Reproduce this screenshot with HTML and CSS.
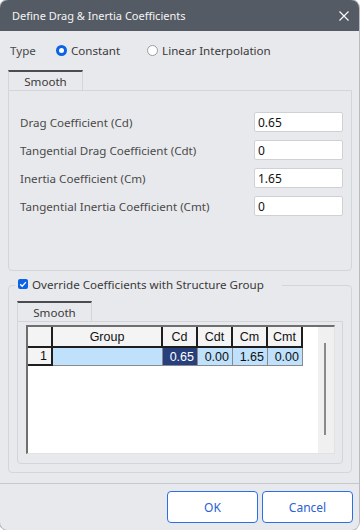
FILE: index.html
```html
<!DOCTYPE html>
<html>
<head>
<meta charset="utf-8">
<link rel="stylesheet" href="styles.css">
</head>
<body>
<div class="dialog">
  <div class="titlebar">
    <span class="title">Define Drag &amp; Inertia Coefficients</span>
    <svg class="close" width="10" height="10" viewBox="0 0 10 10"><path d="M0.5 0.5 L9.5 9.5 M9.5 0.5 L0.5 9.5" stroke="#ffffff" stroke-width="1.1" fill="none"/></svg>
  </div>
  <div class="content">
    <div class="type-row">
      <span class="type-label">Type</span>
      <span class="radio checked"></span><span class="radio-label">Constant</span>
      <span class="radio unchecked"></span><span class="radio-label">Linear Interpolation</span>
    </div>
    <div class="tab">Smooth</div>
    <div class="panel">
      <div class="field-row"><span class="field-label">Drag Coefficient (Cd)</span><span class="input">0.65</span></div>
      <div class="field-row"><span class="field-label">Tangential Drag Coefficient (Cdt)</span><span class="input">0</span></div>
      <div class="field-row"><span class="field-label">Inertia Coefficient (Cm)</span><span class="input">1.65</span></div>
      <div class="field-row"><span class="field-label">Tangential Inertia Coefficient (Cmt)</span><span class="input">0</span></div>
    </div>
    <div class="group">
      <div class="legend">
        <span class="checkbox"><svg width="10" height="10" viewBox="0 0 10 10"><path d="M2.2 5.2 L4.2 7.2 L7.9 3.1" stroke="#fff" stroke-width="1.3" fill="none"/></svg></span>
        <span class="legend-text">Override Coefficients with Structure Group</span>
      </div>
      <div class="tab inner-tab">Smooth</div>
      <div class="inner-panel">
        <div class="grid">
          <div class="grid-table">
            <div class="grow head">
              <div class="cell c-rh"></div>
              <div class="cell c-grp">Group</div>
              <div class="cell c-num">Cd</div>
              <div class="cell c-num">Cdt</div>
              <div class="cell c-num">Cm</div>
              <div class="cell c-num">Cmt</div>
            </div>
            <div class="grow data">
              <div class="cell c-rh">1</div>
              <div class="cell c-grp sel"></div>
              <div class="cell c-num active">0.65</div>
              <div class="cell c-num sel">0.00</div>
              <div class="cell c-num sel">1.65</div>
              <div class="cell c-num sel">0.00</div>
            </div>
          </div>
          <div class="scrollbar"><div class="thumb"></div></div>
        </div>
      </div>
    </div>
  </div>
  <div class="footer">
    <button class="btn">OK</button>
    <button class="btn">Cancel</button>
  </div>
</div>
</body>
</html>
```
FILE: styles.css
```css
html, body {
  margin: 0;
  padding: 0;
  background: #ffffff;
}
body {
  font-family: "Noto Sans", "Open Sans", sans-serif;
  font-size: 11.6px;
  color: #3a3a3a;
}
.dialog {
  width: 359px;
  height: 530px;
  background: #e8e9ec;
  border-radius: 8px;
  overflow: hidden;
  display: flex;
  flex-direction: column;
  box-shadow: 0 0 0 1px #b9bbc0;
}
.titlebar {
  height: 31px;
  background: #545b64;
  display: flex;
  align-items: center;
  justify-content: space-between;
  padding: 0 10px 0 12px;
  flex: none;
}
.title {
  color: #f4f4f4;
  font-size: 11px;
}
.content {
  padding: 0 7px 0 8px;
  flex: none;
}
.type-row {
  height: 39px;
  display: flex;
  align-items: center;
  padding-left: 2px;
}
.type-label {
  color: #4a4a4a;
  width: 46px;
}
.radio {
  width: 11px;
  height: 11px;
  border-radius: 50%;
  box-sizing: border-box;
  flex: none;
}
.radio.checked {
  background: #ffffff;
  border: 3px solid #0c63e4;
}
.radio.unchecked {
  background: #ffffff;
  border: 1px solid #9a9ca0;
  margin-left: 27px;
}
.radio-label {
  margin-left: 4px;
  color: #3a3a3a;
}
.tab {
  width: 75px;
  height: 20px;
  box-sizing: border-box;
  border-top: 2px solid #4a4c50;
  border-left: 1px solid #d3d5d9;
  border-right: 1px solid #d3d5d9;
  display: flex;
  align-items: center;
  justify-content: center;
  color: #3a3a3a;
}
.panel {
  height: 181px;
  box-sizing: border-box;
  border: 1px solid #d3d5d9;
  border-radius: 0 0 4px 4px;
  padding: 21px 8px 0 11px;
  display: flex;
  flex-direction: column;
  gap: 8px;
}
.field-row {
  height: 20px;
  display: flex;
  align-items: center;
  justify-content: space-between;
}
.field-label {
  color: #4a4a4a;
}
.input {
  width: 89px;
  height: 20px;
  box-sizing: border-box;
  background: #ffffff;
  border: 1px solid #cfd1d5;
  border-radius: 2px;
  padding-left: 3px;
  display: flex;
  align-items: center;
  color: #111;
  font-size: 12px;
}
.group {
  margin-top: 14px;
  border: 1px solid #d3d5d9;
  border-radius: 4px;
  padding: 0 8px 8px 8px;
  height: 188px;
  box-sizing: border-box;
}
.legend {
  margin-top: -11px;
  margin-left: -2px;
  height: 18px;
  width: fit-content;
  display: flex;
  align-items: center;
  padding: 0 18px 0 3px;
  background: #e8e9ec;
}
.checkbox {
  width: 10px;
  height: 10px;
  border-radius: 2px;
  background: #0c63e4;
  display: flex;
  flex: none;
}
.legend-text {
  margin-left: 4px;
  color: #3a3a3a;
}
.inner-tab {
  margin-top: 8px;
}
.inner-panel {
  height: 143px;
  box-sizing: border-box;
  border: 1px solid #d3d5d9;
  border-radius: 0 0 4px 4px;
  padding: 3px 7px 0 8px;
}
.grid {
  height: 129px;
  box-sizing: border-box;
  background: #ffffff;
  border-top: 2px solid #6f6f6f;
  border-left: 2px solid #6f6f6f;
  border-right: 1px solid #e2e2e2;
  border-bottom: 1px solid #e2e2e2;
  display: flex;
  font-family: "Liberation Sans", Arial, sans-serif;
  font-size: 12.5px;
  color: #111;
}
.grid-table {
  flex: 1;
}
.grow {
  display: flex;
}
.grow.head {
  height: 21px;
}
.grow.data {
  height: 18px;
}
.cell {
  box-sizing: border-box;
  display: flex;
  align-items: center;
  flex: none;
}
.head .cell {
  background: #f4f4f4;
  border-right: 2px solid #1e1e1e;
  border-bottom: 2px solid #1e1e1e;
  justify-content: center;
}
.c-rh {
  width: 25px;
}
.c-grp {
  width: 110px;
}
.c-num {
  width: 35px;
}
.data .cell {
  border-right: 1px solid #8a8a8a;
  border-bottom: 1px solid #8a8a8a;
  justify-content: flex-end;
  padding-right: 3px;
}
.data .c-rh {
  background: #f4f4f4;
  border-right: 2px solid #1e1e1e;
  border-bottom: 2px solid #1e1e1e;
  padding-right: 4px;
}
.data .sel {
  background: #bfe1fb;
}
.data .active {
  background: #273f7d;
  color: #ffffff;
}
.scrollbar {
  width: 16px;
  background: #f0f0f0;
  display: flex;
  justify-content: center;
  flex: none;
}
.thumb {
  width: 2px;
  height: 92px;
  margin-top: 16px;
  background: #8a8a8a;
  margin-left: -2px;
}
.footer {
  margin-top: 10px;
  border-top: 1px solid #c5c8cd;
  display: flex;
  justify-content: flex-end;
  gap: 4px;
  padding: 7px 6px 0 0;
}
.btn {
  width: 91px;
  height: 32px;
  background: #ffffff;
  border: 1px solid #2a6fe6;
  border-radius: 4px;
  color: #2a62d4;
  font-family: "Noto Sans", "Open Sans", sans-serif;
  font-size: 12px;
  padding: 0;
}
```
